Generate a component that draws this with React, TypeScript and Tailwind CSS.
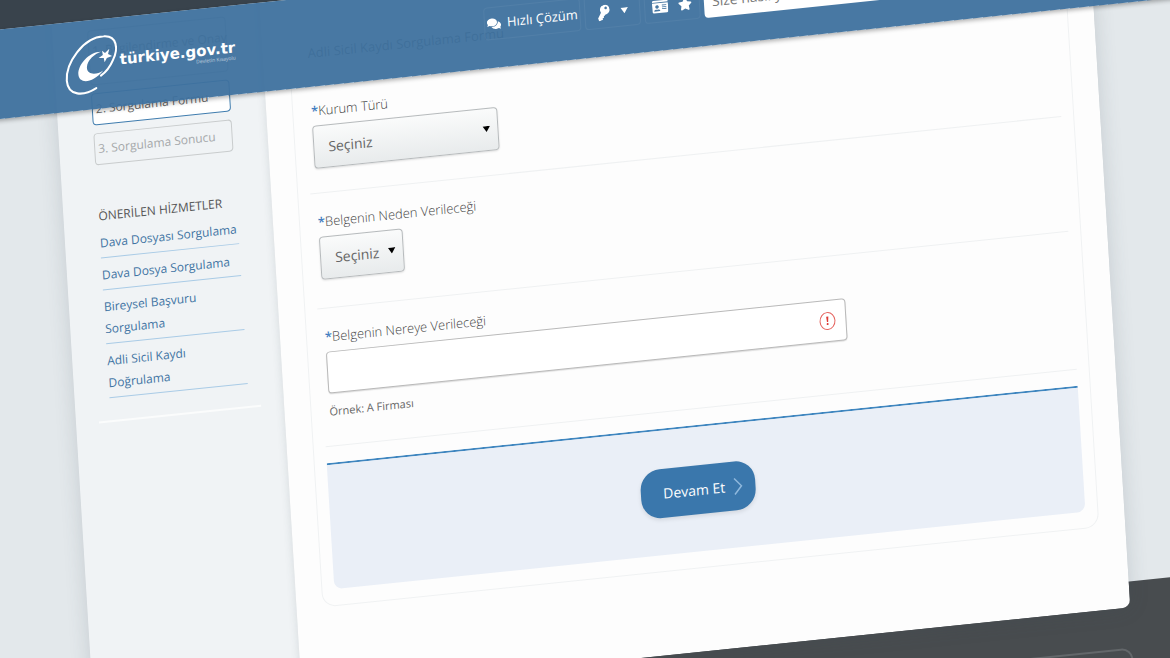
import { useState } from "react";
import type { ReactNode } from "react";
import clsx from "clsx";
import { FaComments, FaIdCard, FaKey, FaStar } from "react-icons/fa";

const STEPS = [
  { label: "1. Bilgilendirme ve Onay", state: "done" },
  { label: "2. Sorgulama Formu", state: "active" },
  { label: "3. Sorgulama Sonucu", state: "next" },
];

const SERVICES = [
  "Dava Dosyası Sorgulama",
  "Dava Dosya Sorgulama",
  "Bireysel Başvuru Sorgulama",
  "Adli Sicil Kaydı Doğrulama",
];

function Caret({ className }: { className?: string }) {
  return (
    <svg viewBox="0 0 10 8" className={className} aria-hidden="true">
      <path d="M0 0h10L5 8z" fill="currentColor" />
    </svg>
  );
}

function Logo() {
  return (
    <a href="#" className="flex items-center text-white" aria-label="türkiye.gov.tr">
      <svg viewBox="0 0 54 62" className="h-16 w-14" fill="none" aria-hidden="true">
        <g transform="rotate(6 27 31)">
          {/* open ring */}
          <path
            d="M32 53C20 61 5 61 3 46C1 29 17 4 37 3C50 2 52 15 47 26C44 34 40 38 36 41"
            stroke="white"
            strokeWidth="2"
            strokeLinecap="round"
          />
          <path d="M35 18C23 18 13 31 14 40C15 49 28 49 38 36C31 41 22 40 22 33C22 26 29 20 35 18Z" fill="white" />
          <path d="M43 15L42 20L46 22L41 24L39 28L38 24L33 24L37 21L36 17L39 19Z" fill="white" />
        </g>
      </svg>
      <span className="flex flex-col items-end">
        <span className="font-['DejaVu_Sans'] text-[15px] leading-4 font-bold">türkiye.gov.tr</span>
        <span className="text-[5px] leading-[5px] opacity-60">Devletin Kısayolu</span>
      </span>
    </a>
  );
}

function HeaderButton({ children, label, className }: { children: ReactNode; label?: string; className?: string }) {
  return (
    <button
      type="button"
      aria-label={label}
      className={clsx(
        "flex h-[33px] items-center justify-center rounded border border-white/5 text-[13px] text-white",
        className
      )}
    >
      {children}
    </button>
  );
}

function Header() {
  return (
    <header className="absolute inset-x-0 top-0 z-20">
      <div className="h-9 bg-[#39434c]" />
      <div className="flex h-[89px] items-center bg-[#3e719e]/95 pl-[124px] shadow-[0_2px_4px_rgba(0,0,0,0.3)]">
        <Logo />
        <div className="ml-auto flex w-[65%] items-center gap-1">
          <HeaderButton className="gap-1.5 px-0.5">
            <FaComments className="size-3.5" />
            Hızlı Çözüm
          </HeaderButton>
          <HeaderButton label="Giriş" className="w-14 gap-2.5">
            <FaKey className="size-3.5 -rotate-[15deg]" />
            <Caret className="h-1.5 w-2" />
          </HeaderButton>
          <HeaderButton label="Favoriler" className="w-14 gap-2.5">
            <FaIdCard className="size-4" />
            <FaStar className="size-3.5" />
          </HeaderButton>
          <input
            type="search"
            aria-label="Arama"
            placeholder="Size nasıl yardım edebilirim?"
            className="h-[33px] w-72 rounded bg-white px-2 text-sm placeholder:text-[#777]"
          />
        </div>
      </div>
    </header>
  );
}

function Sidebar() {
  return (
    <aside className="w-[209px] shrink-0 bg-[#f0f3f5] px-[35px] pt-[46px]">
      <ol className="flex flex-col gap-2">
        {STEPS.map((step) => (
          <li
            key={step.label}
            className={clsx(
              "rounded border px-[3px] text-xs leading-[30px] whitespace-nowrap",
              step.state === "done" && "h-[55px] border-[#b9bec2] leading-[40px] text-[#777]",
              step.state === "active" && "border-[#3f7cae] bg-white text-[#666]",
              step.state === "next" && "border-[#c9cccd] text-[#a5a8aa]"
            )}
          >
            {step.label}
          </li>
        ))}
      </ol>
      <h2 className="mt-[41px] text-xs leading-5 whitespace-nowrap text-[#555]">ÖNERİLEN HİZMETLER</h2>
      <ul>
        {SERVICES.map((name) => (
          <li key={name} className="border-b border-[#a9cbe6] pt-1.5 pb-[3px]">
            <a href="#" className="block text-xs leading-[22px] font-medium text-[#3f74a3]">
              {name}
            </a>
          </li>
        ))}
      </ul>
      <hr className="-mx-3 mt-[22px] border-t-2 border-[#fbfcfc]" />
    </aside>
  );
}

const selectClass =
  "h-[43px] w-full appearance-none rounded border border-[#b6babc] bg-linear-to-b from-[#fafbfb] to-[#e8ebec] pl-3.5 text-sm text-[#666] shadow-[0_1px_2px_rgba(0,0,0,0.12)]";

function Field({ id, label, children }: { id: string; label: string; children: ReactNode }) {
  return (
    <div className="border-b border-[#eff1f2] pt-[18px] pl-1.5">
      <label htmlFor={id} className="block text-[13px] leading-5 font-light text-[#444]">
        <span className="font-semibold text-[#3f7cc0]">*</span>
        {label}
      </label>
      {children}
    </div>
  );
}

function Form() {
  const [place, setPlace] = useState("");

  return (
    <form
      className="rounded-[14px] border border-[#f0f2f3] px-3 pb-4"
      onSubmit={(e) => e.preventDefault()}
    >
      <h1 className="pt-20 pb-5 pl-1.5 text-[13px] leading-5 text-[#555]">Adli Sicil Kaydı Sorgulama Formu</h1>

      <Field id="kurum" label="Kurum Türü">
        <div className="relative mt-[5px] mb-6 w-[186px]">
          <select id="kurum" className={selectClass}>
            <option>Seçiniz</option>
          </select>
          <Caret className="pointer-events-none absolute top-[18px] right-2 h-1.5 w-2 text-black" />
        </div>
      </Field>

      <Field id="neden" label="Belgenin Neden Verileceği">
        <div className="relative mt-[5px] mb-7 w-[84px]">
          <select id="neden" className={selectClass}>
            <option>Seçiniz</option>
          </select>
          <Caret className="pointer-events-none absolute top-[18px] right-2 h-1.5 w-2 text-black" />
        </div>
      </Field>

      <Field id="nereye" label="Belgenin Nereye Verileceği">
        <div className="relative mt-[5px] w-[522px]">
          <input
            id="nereye"
            type="text"
            value={place}
            onChange={(e) => setPlace(e.target.value)}
            className="block h-[42px] w-full rounded border border-[#b9b9b9] bg-white pr-10 pl-3 text-sm text-[#555] shadow-[0_1px_1px_rgba(0,0,0,0.12)]"
          />
          <svg viewBox="0 0 18 18" className="absolute top-3 right-2.5 size-[18px]" fill="none" aria-hidden="true">
            <ellipse cx="9" cy="9" rx="7.500" ry="8.500" stroke="#e5645f" strokeWidth="1" />
            <path d="M7.900 4.500h2.200l-.5 5.500H8.400z" fill="#dd3b35" />
            <circle cx="9" cy="12" r="1" fill="#dd3b35" />
          </svg>
        </div>
        <p className="mt-2 mb-6 text-[11px] leading-5 text-[#666]">Örnek: A Firması</p>
      </Field>

      <div className="mt-4 flex h-[126px] justify-center rounded-b-lg border-t-2 border-[#3f86bf] bg-[#eaeff7] pt-[38px] pr-4">
        <button
          type="submit"
          className="flex h-[49px] items-center gap-2 rounded-[20px] bg-[#3a77ac] pr-3 pl-[22px] text-sm text-white shadow-[0_2px_4px_rgba(0,0,0,0.1)]"
        >
          Devam Et
          <svg viewBox="0 0 10 20" className="h-5 w-2.5" fill="none" aria-hidden="true">
            <path d="M1 2l7 8-7 8" stroke="#8fb8dc" strokeWidth="1.500" />
          </svg>
        </button>
      </div>
    </form>
  );
}

export default function App() {
  return (
    <div className="h-screen overflow-hidden bg-[#39434c] font-['Open_Sans',sans-serif]">
      {/* the whole page leans as one sheet */}
      <div className="relative -mr-24 -ml-16 min-h-[900px] origin-top-left -rotate-[5.900deg] -skew-x-[2.400deg] bg-[#e3e8eb]">
        <Header />
        <div className="flow-root">
          <main className="relative z-10 mr-[174px] ml-[114px] flex h-[727px] overflow-hidden rounded-b-lg shadow-[0_0_20px_rgba(60,80,90,0.18)]">
            <Sidebar />
            <section className="grow bg-[#fdfdfd] px-[26px] shadow-[0_0_8px_rgba(60,80,90,0.15)]">
              <Form />
            </section>
          </main>
        </div>
        <footer className="-mt-[26px] min-h-60 bg-[#484c4f] pt-[66px] pr-[174px] pl-[114px]">
          <div className="h-40 rounded-xl border-2 border-[#63676a]" />
        </footer>
      </div>
    </div>
  );
}
